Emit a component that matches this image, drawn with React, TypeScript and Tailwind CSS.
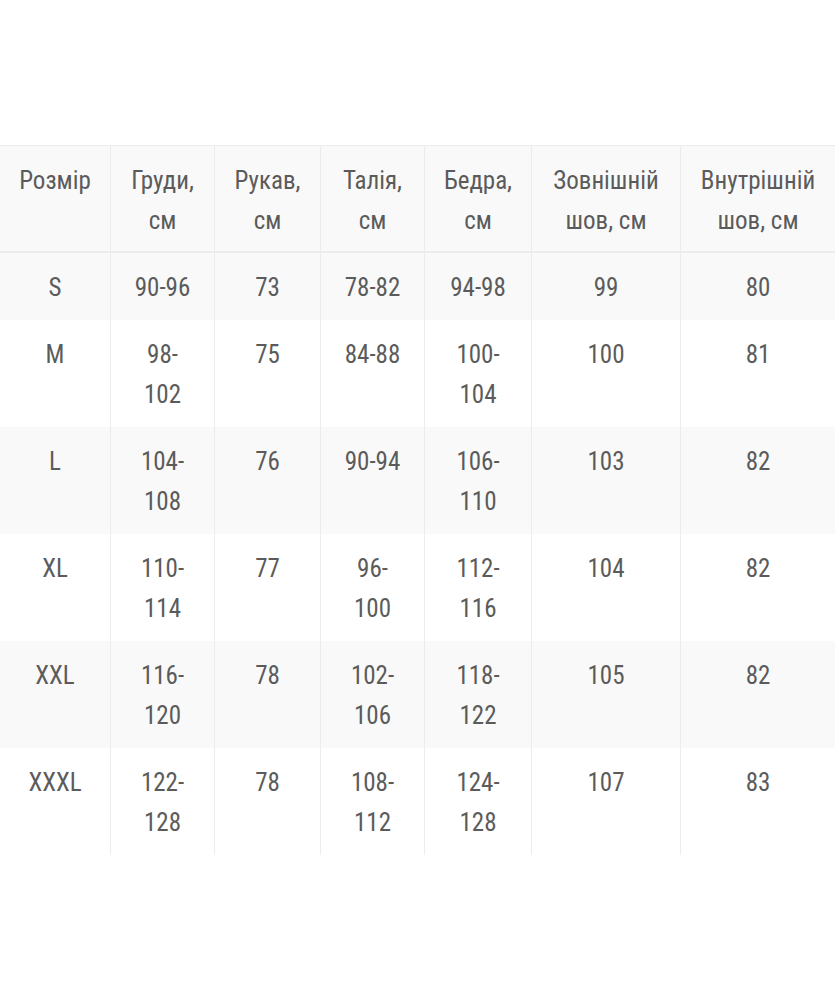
import React from 'react';

const headers: string[][] = [
  ['Розмір'],
  ['Груди,', 'см'],
  ['Рукав,', 'см'],
  ['Талія,', 'см'],
  ['Бедра,', 'см'],
  ['Зовнішній', 'шов, см'],
  ['Внутрішній', 'шов, см'],
];

const rows: string[][][] = [
  [['S'], ['90-96'], ['73'], ['78-82'], ['94-98'], ['99'], ['80']],
  [['M'], ['98-', '102'], ['75'], ['84-88'], ['100-', '104'], ['100'], ['81']],
  [['L'], ['104-', '108'], ['76'], ['90-94'], ['106-', '110'], ['103'], ['82']],
  [['XL'], ['110-', '114'], ['77'], ['96-', '100'], ['112-', '116'], ['104'], ['82']],
  [['XXL'], ['116-', '120'], ['78'], ['102-', '106'], ['118-', '122'], ['105'], ['82']],
  [['XXXL'], ['122-', '128'], ['78'], ['108-', '112'], ['124-', '128'], ['107'], ['83']],
];

const Cell: React.FC<{ lines: string[]; first: boolean; head?: boolean }> = ({ lines, first, head }) => (
  <div className={`pt-[15px] ${head ? 'pb-[10px]' : 'pb-[12px]'} text-center ${first ? '' : 'border-l border-[#ececec]'}`}>
    {lines.map((l, i) => (
      <div key={i}>{l}</div>
    ))}
  </div>
);

const App: React.FC = () => {
  return (
    <div
      className="w-[835px] h-[1000px] bg-white overflow-hidden pt-[145px] text-[#5b5b5b] text-[25px] leading-[40px]"
      style={{ fontFamily: '"Roboto Condensed", "Liberation Sans Narrow", "DejaVu Sans Condensed", Roboto, sans-serif' }}
    >
      {/* header */}
      <div className="grid grid-cols-[110px_104px_106px_104px_107px_149px_1fr] border-t border-[#ececec] bg-[#f9f9f9] border-b-2 border-b-[#ececec]">
        {headers.map((h, i) => (
          <Cell key={i} lines={h} first={i === 0} head />
        ))}
      </div>
      {rows.map((r, ri) => (
        <div
          key={ri}
          className={`grid grid-cols-[110px_104px_106px_104px_107px_149px_1fr] ${ri % 2 === 0 ? 'bg-[#f9f9f9]' : 'bg-white'}`}
        >
          {r.map((c, ci) => (
            <Cell key={ci} lines={c} first={ci === 0} />
          ))}
        </div>
      ))}
    </div>
  );
};

export default App;
